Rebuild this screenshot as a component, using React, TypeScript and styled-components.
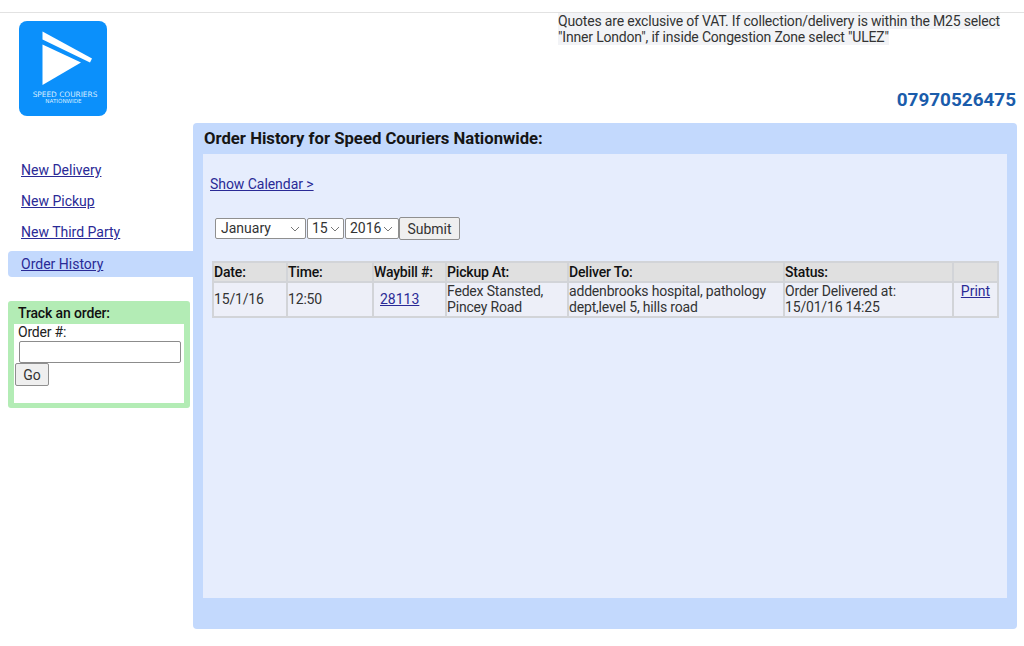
import React from 'react'
import styled, { createGlobalStyle } from 'styled-components'

const GlobalStyle = createGlobalStyle`
  html, body {
    margin: 0;
    padding: 0;
    background: #fff;
  }
  body {
    font-family: Roboto, "Liberation Sans", sans-serif;
    font-size: 14px;
    line-height: 16px;
    color: #222;
  }
  a {
    color: #2a2a96;
    text-decoration: underline;
  }
`

const navItems = ['New Delivery', 'New Pickup', 'New Third Party', 'Order History']

const chevron =
  "url(\"data:image/svg+xml,%3Csvg xmlns='http://www.w3.org/2000/svg' width='10' height='6'%3E%3Cpath d='M1 1l4 4 4-4' fill='none' stroke='%23777' stroke-width='1'/%3E%3C/svg%3E\")"

export default function App() {
  return (
    <Page>
      <GlobalStyle />
      <Header>
        <Logo />
        <HeaderRight>
          <Note>
            <mark>Quotes are exclusive of VAT. If collection/delivery is within the M25 select</mark>
            <br />
            <mark>"Inner London", if inside Congestion Zone select "ULEZ"</mark>
          </Note>
          <Phone>07970526475</Phone>
        </HeaderRight>
      </Header>
      <Body>
        <Sidebar>
          <Nav>
            {navItems.map((item) => (
              <NavItem key={item} $active={item === 'Order History'}>
                <a href="#">{item}</a>
              </NavItem>
            ))}
          </Nav>
          <TrackBox>
            <TrackTitle>Track an order:</TrackTitle>
            <TrackInner>
              <TrackLabel>Order #:</TrackLabel>
              <TrackInput type="text" />
              <GoButton>Go</GoButton>
            </TrackInner>
          </TrackBox>
        </Sidebar>
        <Panel>
          <PanelTitle>Order History for Speed Couriers Nationwide:</PanelTitle>
          <PanelContent>
            <CalendarLink href="#">Show Calendar &gt;</CalendarLink>
            <DateForm>
              <MonthSelect defaultValue="January">
                <option>January</option>
                <option>February</option>
              </MonthSelect>
              <DaySelect defaultValue="15">
                <option>15</option>
              </DaySelect>
              <YearSelect defaultValue="2016">
                <option>2016</option>
              </YearSelect>
              <SubmitButton>Submit</SubmitButton>
            </DateForm>
            <OrderTable>
              <colgroup>
                <col style={{ width: 74 }} />
                <col style={{ width: 86 }} />
                <col style={{ width: 73 }} />
                <col style={{ width: 122 }} />
                <col style={{ width: 216 }} />
                <col style={{ width: 169 }} />
                <col style={{ width: 45 }} />
              </colgroup>
              <thead>
                <tr>
                  <HeadCell>Date:</HeadCell>
                  <HeadCell>Time:</HeadCell>
                  <HeadCell>Waybill #:</HeadCell>
                  <HeadCell>Pickup At:</HeadCell>
                  <HeadCell>Deliver To:</HeadCell>
                  <HeadCell>Status:</HeadCell>
                  <HeadCell />
                </tr>
              </thead>
              <tbody>
                <tr>
                  <DataCell>15/1/16</DataCell>
                  <DataCell>12:50</DataCell>
                  <WaybillCell>
                    <a href="#">28113</a>
                  </WaybillCell>
                  <DataCell>
                    Fedex Stansted,
                    <br />
                    Pincey Road
                  </DataCell>
                  <DataCell>
                    addenbrooks hospital, pathology
                    <br />
                    dept,level 5, hills road
                  </DataCell>
                  <DataCell>
                    Order Delivered at:
                    <br />
                    15/01/16 14:25
                  </DataCell>
                  <PrintCell>
                    <a href="#">Print</a>
                  </PrintCell>
                </tr>
              </tbody>
            </OrderTable>
          </PanelContent>
        </Panel>
      </Body>
    </Page>
  )
}

function Logo() {
  return (
    <LogoSvg viewBox="0 0 88 95" aria-label="Speed Couriers Nationwide">
      <rect width="88" height="95" rx="8" fill="#0b90fb" />
      <path d="M23.5 10.5 L73 37.5 L71 41.5 L23.5 18.5 Z" fill="#fff" />
      <path d="M23.5 23.5 L62 41.5 L23.5 64 Z" fill="#fff" />
      <LogoText x="46" y="75.5" fontSize="7.4">
        SPEED COURIERS
      </LogoText>
      <LogoText x="44.5" y="82" fontSize="5.6">
        NATIONWIDE
      </LogoText>
    </LogoSvg>
  )
}

const Page = styled.div`
  width: 1024px;
  height: 646px;
  overflow: hidden;
  padding-top: 12px;
  box-sizing: border-box;
`

const Header = styled.header`
  height: 111px;
  box-sizing: border-box;
  border-top: 1px solid #e2e2e2;
  display: flex;
  justify-content: space-between;
  padding: 0 8px 0 19px;
`

const LogoSvg = styled.svg`
  width: 88px;
  height: 95px;
  margin-top: 8px;
  flex: none;
`

const LogoText = styled.text`
  fill: #d8eeff;
  font-family: "DejaVu Sans", sans-serif;
  text-anchor: middle;
`

const HeaderRight = styled.div`
  width: 458px;
  display: flex;
  flex-direction: column;
  justify-content: space-between;
`

const Note = styled.div`
  letter-spacing: -0.18px;
  color: #333;

  mark {
    background: #f2f3f6;
    color: inherit;
  }
`

const Phone = styled.div`
  align-self: flex-end;
  margin-bottom: 12px;
  font-size: 18.9px;
  line-height: 22px;
  font-weight: 700;
  color: #1a5cab;
`

const Body = styled.div`
  display: flex;
  align-items: flex-start;
`

const Sidebar = styled.aside`
  width: 185px;
  margin-left: 8px;
  padding-top: 34px;
  flex: none;
`

const Nav = styled.nav`
  display: flex;
  flex-direction: column;
  gap: 5px;
`

const NavItem = styled.div<{ $active?: boolean }>`
  height: 26px;
  display: flex;
  align-items: center;
  padding-left: 13px;
  margin-top: ${(p) => (p.$active ? '1px' : '0')};
  border-radius: 4px 0 0 4px;
  background: ${(p) => (p.$active ? '#c3d9fd' : 'transparent')};
`

const TrackBox = styled.div`
  width: 182px;
  height: 107px;
  margin-top: 24px;
  padding: 0 6px 5px;
  box-sizing: border-box;
  display: flex;
  flex-direction: column;
  border-radius: 3px;
  background: #b3ecb5;
`

const TrackTitle = styled.div`
  height: 23px;
  display: flex;
  align-items: center;
  padding: 0 4px;
  letter-spacing: -0.14px;
  font-weight: 500;
  color: #111;
`

const TrackInner = styled.div`
  flex: 1;
  background: #fff;
  display: flex;
  flex-direction: column;
  align-items: flex-start;
  padding: 0 1px;
`

const TrackLabel = styled.div`
  height: 17px;
  padding-left: 3px;
  letter-spacing: -0.2px;
  line-height: 16px;
`

const TrackInput = styled.input`
  width: 162px;
  height: 22px;
  margin: 0 0 0 4px;
  padding: 0;
  box-sizing: border-box;
  border: 1px solid #8c8c8c;
  border-radius: 2px;
  background: #fff;
`

const GoButton = styled.button`
  width: 34px;
  height: 23px;
  padding: 0;
  font: inherit;
  color: #333;
  background: #efefef;
  border: 1px solid #8f8f8f;
  border-radius: 2px;
`

const Panel = styled.main`
  width: 824px;
  height: 506px;
  flex: none;
  box-sizing: border-box;
  padding: 0 10px 31px;
  display: flex;
  flex-direction: column;
  border-radius: 4px;
  background: #c3d9fd;
`

const PanelTitle = styled.h1`
  height: 31px;
  margin: 0 0 0 1px;
  display: flex;
  align-items: center;
  font-size: 16.7px;
  font-weight: 700;
  color: #151515;
`

const PanelContent = styled.div`
  flex: 1;
  background: #e6edfd;
  padding: 22px 9px 0 7px;
  display: flex;
  flex-direction: column;
  align-items: flex-start;
`

const CalendarLink = styled.a`
  letter-spacing: -0.05px;
  line-height: 16px;
`

const DateForm = styled.form`
  display: flex;
  align-items: center;
  margin: 25px 0 0 5px;
`

const Select = styled.select`
  height: 21px;
  margin: 0;
  padding: 0 0 1px 5px;
  box-sizing: border-box;
  appearance: none;
  font: inherit;
  color: #333;
  background: #fff ${chevron} no-repeat right 5px center;
  border: 1px solid #8f8f8f;
  border-radius: 2px;
`

const MonthSelect = styled(Select)`
  width: 91px;
  margin-right: 1px;
`

const DaySelect = styled(Select)`
  width: 37px;
  margin-right: 1px;
  padding-left: 4px;
  background-position: right 3px center;
`

const YearSelect = styled(Select)`
  width: 54px;
  padding-left: 4px;
`

const SubmitButton = styled.button`
  width: 61px;
  height: 23px;
  padding: 0;
  font: inherit;
  color: #333;
  background: #efefef;
  border: 1px solid #8f8f8f;
  border-radius: 2px;
`

const OrderTable = styled.table`
  width: 785px;
  margin: 21px 0 0 2px;
  table-layout: fixed;
  border-collapse: collapse;
  border: 2px solid #d2d4d8;
  letter-spacing: -0.18px;
`

const HeadCell = styled.th`
  height: 17px;
  padding: 0 0 1px;
  text-align: left;
  font-weight: 500;
  color: #111;
  background: #e0e0e0;
  border: 2px solid #d2d4d8;
`

const DataCell = styled.td`
  height: 32px;
  padding: 0 0 1px;
  text-align: left;
  color: #333;
  background: #edeff8;
  border: 2px solid #d2d4d8;
`

const WaybillCell = styled(DataCell)`
  padding-left: 6px;
  letter-spacing: 0;
`

const PrintCell = styled(DataCell)`
  vertical-align: top;
  text-align: center;
  padding-top: 0;
  letter-spacing: 0;
`
